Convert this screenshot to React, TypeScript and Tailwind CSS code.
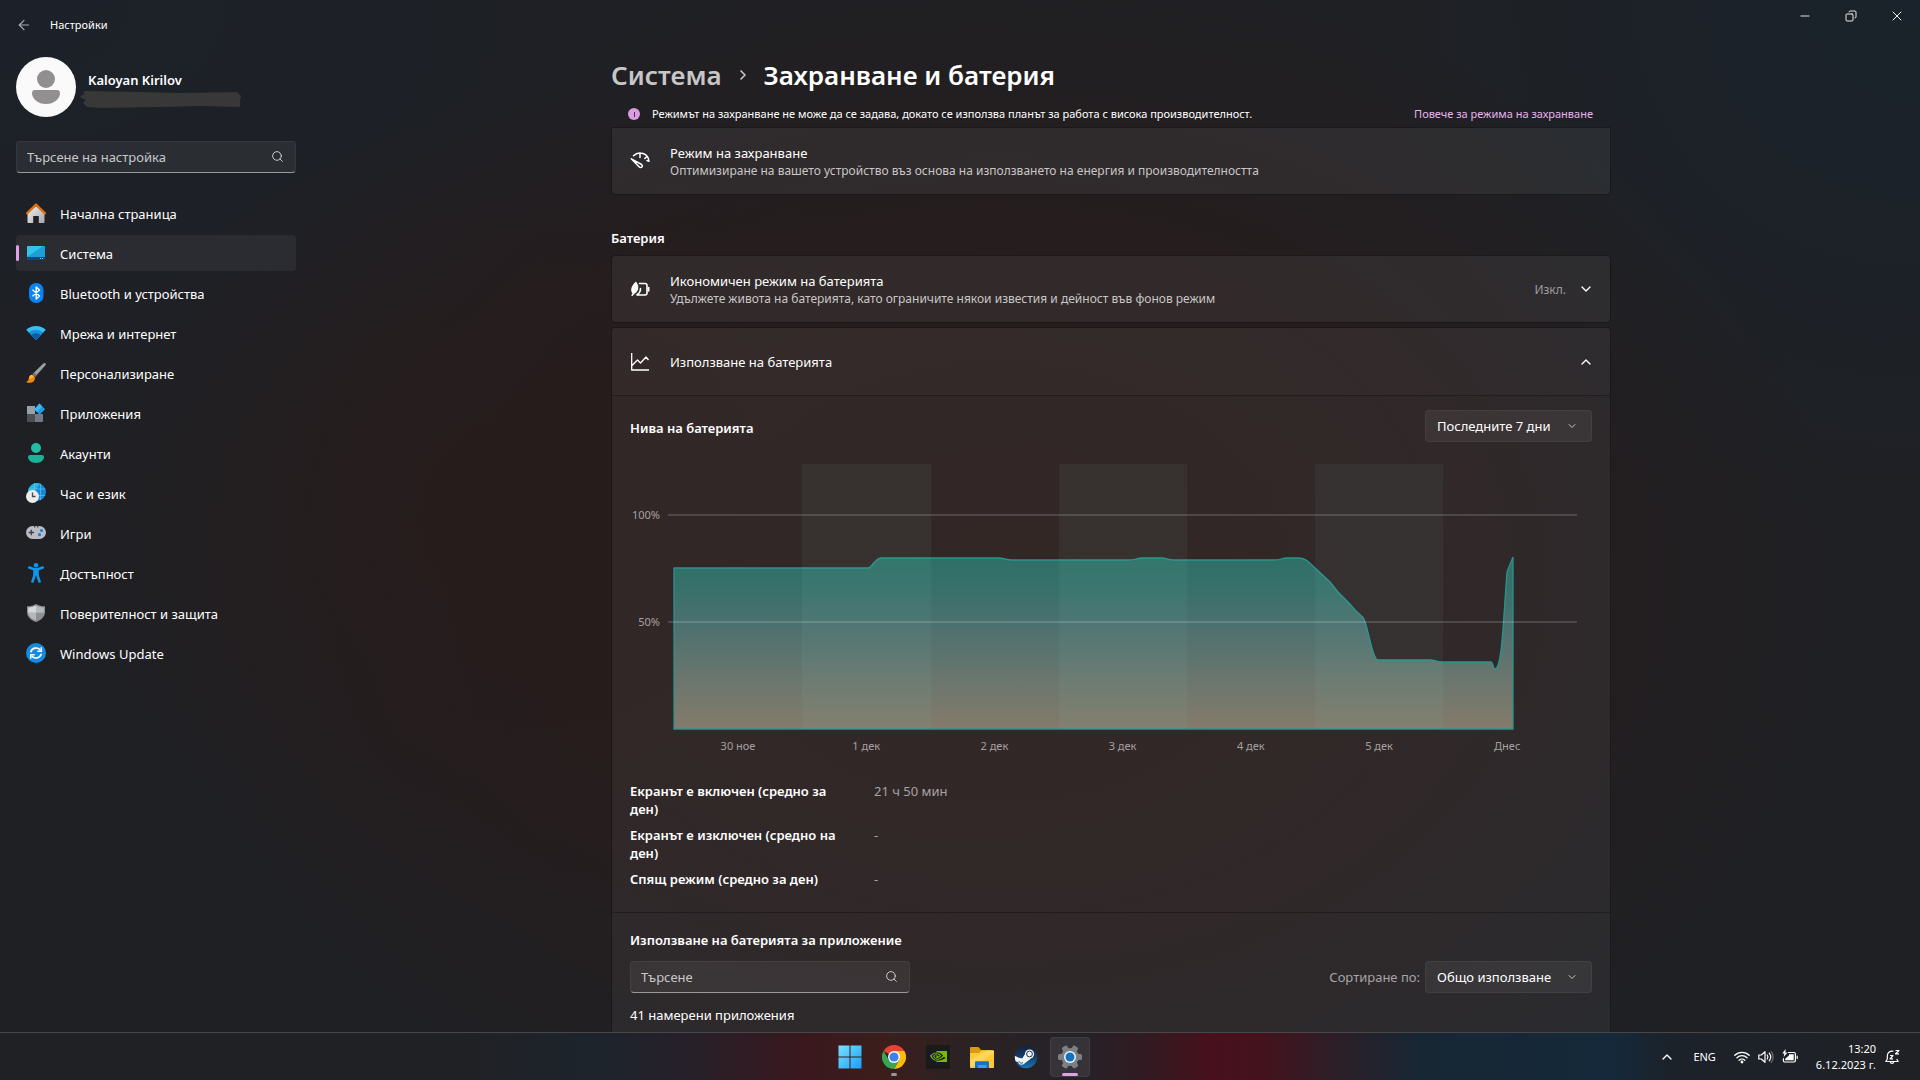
import type { ReactNode } from 'react';
import {
  ArrowLeft,
  ChevronDown,
  ChevronRight,
  ChevronUp,
  Copy,
  Minus,
  Search,
  X,
} from 'lucide-react';
import { SiNvidia } from 'react-icons/si';

const HomeIcon = () => (
  <svg viewBox="0 0 20 20" className="size-5">
    <defs>
      <linearGradient id="home-wall" x1="0" y1="0" x2="1" y2="1">
        <stop offset="0" stopColor="#f2f2f2" />
        <stop offset="1" stopColor="#a5a5a8" />
      </linearGradient>
    </defs>
    <path d="M10 3 1.500 11v8c0 .6.4 1 1 1h4.700v-7h5.600v7h4.700c.6 0 1-.4 1-1v-8z" fill="url(#home-wall)" />
    <path d="M1 10.300 10 1.500l9 8.800" fill="none" stroke="#e8700c" strokeWidth="2.200" strokeLinecap="round" strokeLinejoin="round" />
  </svg>
);

const SystemIcon = () => (
  <svg viewBox="0 0 20 20" className="size-5">
    <rect x="1" y="3" width="18" height="14" rx="1" fill="#1b9fd6" />
    <path d="M2 3h15L1 14V4c0-.6.4-1 1-1z" fill="#34c3e8" />
    <path d="M1 14h18v2c0 .6-.4 1-1 1H2c-.6 0-1-.4-1-1z" fill="#0c4a75" />
    <path d="M14 15h1v1h-1zM16 15h1v1h-1z" fill="#7fd2f2" />
  </svg>
);

const BluetoothIcon = () => (
  <svg viewBox="0 0 20 20" className="size-5">
    <rect x="3" y="0" width="14.500" height="20" rx="7" fill="#0a84f5" />
    <path d="m6.500 6.700 7 6.300-3.300 3V4l3.300 3-7 6.300" fill="none" stroke="#fff" strokeWidth="1.400" strokeLinejoin="round" />
  </svg>
);

const NetworkIcon = () => (
  <svg viewBox="0 0 20 20" className="size-5">
    <path d="M10 3C6.300 3 2.800 4.400.2 6.800L10 17l9.800-10.200C17.200 4.400 13.700 3 10 3z" fill="#35c1f1" />
    <path d="M10 6.800c-2.700 0-5.100 1-7 2.800L10 17l7-7.400a10 10 0 0 0-7-2.800z" fill="#1a8fdd" />
    <path d="M10 10.300c-1.700 0-3.300.6-4.500 1.800L10 17l4.500-4.900a6.500 6.500 0 0 0-4.500-1.800z" fill="#0b5ca8" />
  </svg>
);

const BrushIcon = () => (
  <svg viewBox="0 0 20 20" className="size-5">
    <path d="M19.500.4c-.6-.6-1.500-.4-2.200.2L6.500 11l2.700 2.700L19.200 2.600c.6-.7.8-1.600.3-2.200z" fill="#9b9ea3" />
    <path d="m6.500 11 2.700 2.700 1.700-1.800-2.600-2.700z" fill="#6e7277" />
    <path d="M5.500 11.800c-1.700.5-2.400 2-2.700 3.700C2.600 17 1.800 18.300.2 19c2.300 1.400 5.800 1 7.500-.8 1.300-1.300 1.500-3 .9-4.600z" fill="#f2860d" />
    <path d="M5.500 11.800c-1.700.5-2.400 2-2.700 3.700 2 .6 4.200-.7 5-2.800z" fill="#fbb83b" />
  </svg>
);

const AppsIcon = () => (
  <svg viewBox="0 0 20 20" className="size-5">
    <path d="M1 3h8v8H1z" fill="#9aa0a8" />
    <path d="M1 11h8v8H2c-.6 0-1-.4-1-1z" fill="#4c5056" />
    <path d="M9 11h8v7c0 .6-.4 1-1 1H9z" fill="#747a84" />
    <path d="M13.500.5 19 6.300l-5.500 5.500L8.300 6.300z" fill="#1f9be8" />
    <path d="M13.500.5 8.300 6.300l2.500 2.700 5.500-5.600z" fill="#3bb8f2" />
  </svg>
);

const AccountIcon = () => (
  <svg viewBox="0 0 20 20" className="size-5">
    <circle cx="10" cy="5" r="5" fill="#20bfa5" />
    <path d="M4.200 12h11.600c1.200 0 2.200.9 2.200 2.100C18 17.500 14.500 20 10 20s-8-2.500-8-5.900C2 12.900 3 12 4.200 12z" fill="#1bb39a" />
  </svg>
);

const TimeIcon = () => (
  <svg viewBox="0 0 20 20" className="size-5">
    <circle cx="11" cy="9" r="9" fill="#1787d8" />
    <path d="M2 9a9 9 0 0 1 12-8.500L4.500 15A9 9 0 0 1 2 9z" fill="#2fb4df" />
    <path d="M3 6h16M8.500.5v17M14.500.7v16.500M7 12.500h12" stroke="#6fd0f0" strokeWidth=".8" opacity=".7" />
    <circle cx="6.500" cy="13.500" r="6.500" fill="#ececec" />
    <path d="M6.500 9.500v4h3" fill="none" stroke="#4a4a4a" strokeWidth="1.300" />
  </svg>
);

const GamesIcon = () => (
  <svg viewBox="0 0 20 20" className="size-5">
    <rect x="0" y="3" width="20" height="13" rx="6.500" fill="#b9bcc2" />
    <path d="M8 3h1.500v1.500H8zM11 3h1.500v1.500H11z" fill="#4b4d52" />
    <path d="M5.300 6.800v5.400M2.600 9.500H8" stroke="#3d3f44" strokeWidth="1.300" />
    <circle cx="15.500" cy="7.500" r="1.600" fill="#1a7fd4" />
    <circle cx="13.500" cy="11.700" r="1.600" fill="#1a7fd4" />
  </svg>
);

const AccessibilityIcon = () => (
  <svg viewBox="0 0 20 20" className="size-5">
    <circle cx="10" cy="2.300" r="2.300" fill="#1296ea" />
    <path d="M3.300 4.500 8 6.200h4l4.700-1.700M10 7v4.500M8.500 8v4.500L6.500 18.500M11.500 8v4.500l2 6" fill="none" stroke="#1296ea" strokeWidth="2.600" strokeLinecap="round" strokeLinejoin="round" />
  </svg>
);

const ShieldIcon = () => (
  <svg viewBox="0 0 20 20" className="size-5">
    <path d="M10 1c2.500 1.600 5.500 2.300 9 2.300V9c0 4.500-3.500 8-9 10-5.500-2-9-5.500-9-10V3.300C4.500 3.300 7.500 2.600 10 1z" fill="#8c8f93" />
    <path d="M10 2.500v7.300H2.200V4.500c3-.1 5.500-.7 7.800-2z" fill="#d5d7d9" />
    <path d="M10 2.500v7.300h7.800V4.500c-3-.1-5.500-.7-7.800-2zM10 9.800v7.800c-4.500-1.700-7.400-4.400-7.800-7.800z" fill="#b6b9bc" />
  </svg>
);

const UpdateIcon = () => (
  <svg viewBox="0 0 20 20" className="size-5">
    <circle cx="10" cy="10" r="10" fill="#128be0" />
    <path d="M4.700 9.200A5.500 5.500 0 0 1 14.300 7M15.300 10.800A5.500 5.500 0 0 1 5.700 13" fill="none" stroke="#fff" strokeWidth="1.600" />
    <path d="M15.300 4.200v4h-4M4.700 15.800v-4h4" fill="none" stroke="#fff" strokeWidth="1.500" />
  </svg>
);

const PowerModeIcon = () => (
  <svg viewBox="0 0 20 20" className="size-5 text-white">
    <g fill="none" stroke="currentColor" strokeWidth="1.500" strokeLinecap="round" strokeLinejoin="round">
      <path d="M3.500 4.800a9 9 0 0 1 15.500 5.500l-2-.8M10 2.500v4M14.800 7.500l2-2" />
      <path d="m1.300 7.800 8 8.200c.8.800 2.100.7 2.700-.1.600-.8.400-1.800-.4-2.400z" />
    </g>
  </svg>
);

const SaverIcon = () => (
  <svg viewBox="0 0 20 20" className="size-5 text-white">
    <path d="M6 2.500c.3 1 1.800 2.200 2.200 4.500.5 3-.7 6.500-3.700 7.700l-2.300 2.500-1-1 1.300-1.700C-.3 11 1.500 6.500 6 2.500z" fill="currentColor" />
    <path d="M9.500 4.500H15c1.200 0 2 .8 2 2V14c0 1.200-.8 2-2 2H6.500c2.500-1.200 4-3.500 4-6.500M18.700 8.500v3.500" fill="none" stroke="currentColor" strokeWidth="1.600" strokeLinecap="round" />
  </svg>
);

const UsageIcon = () => (
  <svg viewBox="0 0 20 20" className="size-5 text-white">
    <path d="M1.700 1v17H19M2 13.500 7.500 8l3 3 5.500-6 2.500 3" fill="none" stroke="currentColor" strokeWidth="1.300" strokeLinejoin="round" />
  </svg>
);

const StartIcon = () => (
  <svg viewBox="0 0 24 24" className="size-6">
    <defs>
      <linearGradient id="start-fill" x1="0" y1="0" x2="1" y2="1">
        <stop offset="0" stopColor="#7be0ff" />
        <stop offset="1" stopColor="#17a0f8" />
      </linearGradient>
    </defs>
    <path d="M.5.500h11v11H.5zM12.500.500h11v11h-11zM.5 12.500h11v11H.5zM12.500 12.500h11v11h-11z" fill="url(#start-fill)" />
  </svg>
);

const ChromeIcon = () => (
  <svg viewBox="0 0 24 24" className="size-6">
    <path d="M12 12 1.600 6A12 12 0 0 1 22.400 6z" fill="#ea4335" />
    <path d="M12 12V6h10.400A12 12 0 0 1 12 24l5.200-9z" fill="#fbbc05" />
    <path d="M12 12l5.200 3L12 24A12 12 0 0 1 1.600 6l5.200 9z" fill="#34a853" />
    <circle cx="12" cy="12" r="6" fill="#fff" />
    <circle cx="12" cy="12" r="4.600" fill="#3b82ee" />
  </svg>
);

const FolderIcon = () => (
  <svg viewBox="0 0 24 24" className="size-6">
    <path d="M0 3c0-.6.400-1 1-1h7.500l2.500 3H22c.6 0 1 .4 1 1v4H0z" fill="#d99a13" />
    <path d="M0 8h9l2.500-2.500H23c.6 0 1 .4 1 1V22c0 .6-.4 1-1 1H1c-.6 0-1-.4-1-1z" fill="#fcc93c" />
    <path d="M0 15 17 5.500h6c.6 0 1 .4 1 1V8L1 22.500z" fill="#ffdd75" opacity=".6" />
    <path d="M5 23v-5.500c0-.8.500-1.200 1.200-1.200h11.600c.7 0 1.200.4 1.200 1.200V23z" fill="#1474c4" />
    <path d="M8 20h8.500v3H8z" fill="#3a9fe8" />
  </svg>
);

const SteamIcon = () => (
  <svg viewBox="0 0 24 24" className="size-6">
    <defs>
      <linearGradient id="steam-fill" x1="0" y1="0" x2="0" y2="1">
        <stop offset="0" stopColor="#16203a" />
        <stop offset=".5" stopColor="#123f6b" />
        <stop offset="1" stopColor="#1778b4" />
      </linearGradient>
      <clipPath id="steam-disc">
        <circle cx="12" cy="12" r="11.200" />
      </clipPath>
    </defs>
    <circle cx="12" cy="12" r="11.200" fill="url(#steam-fill)" />
    <g clipPath="url(#steam-disc)">
      <path d="M0 10.500 8 14l3-5 6 4.500-6.500 5L0 16z" fill="#f2f4f6" />
      <circle cx="7.500" cy="16.500" r="3.200" fill="#f2f4f6" />
      <path d="M5 16.300c.7 1.900 2.800 2.500 4 1.200" fill="none" stroke="#155a90" strokeWidth="1" />
      <circle cx="15.500" cy="9" r="4.600" fill="#f2f4f6" />
      <circle cx="15.500" cy="9" r="2.900" fill="#f2f4f6" stroke="#16365c" strokeWidth="1" />
    </g>
  </svg>
);

const GearIcon = () => (
  <svg viewBox="0 0 24 24" className="size-6">
    <g fill="#7b8087">
      <rect x="9" y="0" width="6" height="24" rx="1.500" transform="rotate(30 12 12)" />
      <rect x="9" y="0" width="6" height="24" rx="1.500" transform="rotate(90 12 12)" />
      <rect x="9" y="0" width="6" height="24" rx="1.500" transform="rotate(150 12 12)" />
      <circle cx="12" cy="12" r="9" />
    </g>
    <circle cx="12" cy="12" r="6" fill="#f3f3f3" />
    <circle cx="12" cy="12" r="4.500" fill="#1173bd" />
  </svg>
);

const WifiIcon = () => (
  <svg viewBox="0 0 16 16" className="size-4">
    <g fill="none" stroke="currentColor" strokeWidth="1.300" strokeLinecap="round">
      <path d="M.8 6.300a10.200 10.200 0 0 1 14.400 0M3 8.800a7 7 0 0 1 10 0M5.200 11.200a4 4 0 0 1 5.600 0" />
    </g>
    <circle cx="8" cy="13" r="1.400" fill="currentColor" />
  </svg>
);

const VolumeIcon = () => (
  <svg viewBox="0 0 16 16" className="size-4">
    <g fill="none" stroke="currentColor" strokeWidth="1.200" strokeLinecap="round" strokeLinejoin="round">
      <path d="M.8 6v4h2.500L7 13.300V2.700L3.300 6zM9.200 6a3.300 3.300 0 0 1 0 4M11.200 4.200a6 6 0 0 1 0 7.600" />
      <path d="M13.200 2.600a8.500 8.500 0 0 1 0 10.800" opacity=".35" />
    </g>
  </svg>
);

const BatteryIcon = () => (
  <svg viewBox="0 0 16 16" className="size-4">
    <path d="M6.500 3.500H12c.8 0 1.400.6 1.400 1.400v6.700c0 .8-.6 1.400-1.400 1.400H2.800c-.8 0-1.400-.6-1.400-1.400V9.500M15.200 7v2.500" fill="none" stroke="currentColor" strokeWidth="1.200" strokeLinecap="round" />
    <path d="M7 5.300h4.700v5.900H3.200V9.800L7 6.500zM3.500 0 .3 4.500h2L1.700 8 5.500 3.500H3.400z" fill="currentColor" />
  </svg>
);

const BellIcon = () => (
  <svg viewBox="0 0 16 16" className="size-4">
    <g fill="none" stroke="currentColor" strokeWidth="1.200" strokeLinejoin="round">
      <path d="M9.500 2.300A4.800 4.800 0 0 0 3.300 7v3L1.800 12.500h12.400L12.700 10M6.200 12.700c.2 1 .9 1.700 1.800 1.700s1.600-.7 1.800-1.700" />
      <path d="M6 6.500h3L6 9.800h3M11.500 1.500H15l-3.500 3.300H15" />
    </g>
  </svg>
);

const navItems = [
  { label: 'Начална страница', icon: <HomeIcon /> },
  { label: 'Система', icon: <SystemIcon />, active: true },
  { label: 'Bluetooth и устройства', icon: <BluetoothIcon /> },
  { label: 'Мрежа и интернет', icon: <NetworkIcon /> },
  { label: 'Персонализиране', icon: <BrushIcon /> },
  { label: 'Приложения', icon: <AppsIcon /> },
  { label: 'Акаунти', icon: <AccountIcon /> },
  { label: 'Час и език', icon: <TimeIcon /> },
  { label: 'Игри', icon: <GamesIcon /> },
  { label: 'Достъпност', icon: <AccessibilityIcon /> },
  { label: 'Поверителност и защита', icon: <ShieldIcon /> },
  { label: 'Windows Update', icon: <UpdateIcon /> },
];

const days = ['30 ное', '1 дек', '2 дек', '3 дек', '4 дек', '5 дек', 'Днес'];

const stats = [
  { label: 'Екранът е включен (средно за ден)', value: '21 ч 50 мин' },
  { label: 'Екранът е изключен (средно на ден)', value: '-' },
  { label: 'Спящ режим (средно за ден)', value: '-' },
];

function SearchBox({ id, placeholder }: { id: string; placeholder: string }) {
  return (
    <div className="relative w-[280px]">
      <input
        id={id}
        type="text"
        aria-label={placeholder}
        placeholder={placeholder}
        className="block h-8 w-full rounded border border-white/5 border-b-[#9a9a9a] bg-[#ffffff0f] pl-[10px] pr-10 text-[13px] text-white outline-none placeholder:text-[#c8c8ca]"
      />
      <Search className="pointer-events-none absolute right-3 top-[9px] size-[13px] text-[#d0d0d0]" strokeWidth={1.8} />
    </div>
  );
}

function Dropdown({ id, label, value }: { id: string; label: string; value: string }) {
  return (
    <div className="relative">
      <select
        id={id}
        aria-label={label}
        className="block h-8 w-[167px] appearance-none rounded border border-white/5 bg-white/6 pl-[11px] text-[13px] text-white outline-none"
      >
        <option>{value}</option>
      </select>
      <ChevronDown className="pointer-events-none absolute right-[14px] top-[10px] size-3 text-[#c4c4c4]" strokeWidth={2} />
    </div>
  );
}

function BatteryChart() {
  const area =
    'M44 104H238C242 104 245 94 251 94H368C374 94 376 96 382 96H500C505 96 507 94 512 94H532C536 94 538 96 543 96H645C650 96 652 94 657 94H668C676 94 679 98 685 104L700 118L708 128L718 138L726 147L733 153.500C738 160 742 196 748 196H800C805 196 806 198 812 198H861C863 198 863 205 865 205C872 204 873 160 877 108L883 93V265H44Z';
  return (
    <svg viewBox="0 0 962 292" className="block w-full" role="img" aria-label="Нива на батерията">
      <defs>
        <linearGradient id="level-fill" gradientUnits="userSpaceOnUse" x1="0" y1="94" x2="0" y2="265">
          <stop offset="0" stopColor="#2e7067" />
          <stop offset=".15" stopColor="#36706a" />
          <stop offset=".4" stopColor="#4d706f" />
          <stop offset=".7" stopColor="#6a766e" />
          <stop offset="1" stopColor="#847b6b" />
        </linearGradient>
      </defs>
      <path d={area} fill="url(#level-fill)" stroke="#2a948a" strokeWidth="1.300" />
      <path d="M172 0h129v265H172zM429 0h128v265H429zM685 0h128v265H685z" fill="#80d8c8" fillOpacity=".06" />
      <path d="M38 51H947M38 158H947" stroke="#ffffff" strokeOpacity=".15" strokeWidth="2" />
      <g fill="#a5a0a0" fontSize="11">
        <text x="30" y="55" textAnchor="end">100%</text>
        <text x="30" y="162" textAnchor="end">50%</text>
        {days.map((day, i) => (
          <text key={day} x={108 + i * 128.2} y="286" textAnchor="middle">{day}</text>
        ))}
      </g>
    </svg>
  );
}

function TaskButton({ label, active, children }: { label: string; active?: boolean; children: ReactNode }) {
  return (
    <button
      type="button"
      aria-label={label}
      className={`relative flex size-10 items-center justify-center rounded ${active ? 'border border-white/5 bg-white/8' : ''}`}
    >
      {children}
    </button>
  );
}

export default function App() {
  return (
    <div className="flex h-screen flex-col overflow-hidden bg-[#1f2024] bg-[radial-gradient(ellipse_24%_38%_at_28%_48%,#271c1c_0%,#271c1c00_100%),radial-gradient(ellipse_44%_58%_at_52%_54%,#281c1a_0%,#271c1ccc_55%,#1f202400_100%),radial-gradient(ellipse_40%_45%_at_0%_0%,#1c2129_0%,#1c212900_100%),radial-gradient(ellipse_30%_50%_at_100%_0%,#1a232b_0%,#1a232b00_100%)] font-['Noto_Sans','Open_Sans',sans-serif] text-[13px] leading-[18px] text-white">
      <header className="flex h-8 shrink-0 items-start justify-between">
        <div className="flex items-center pl-4 pt-4">
          <button type="button" aria-label="Назад" className="text-[#a8abb0]">
            <ArrowLeft className="size-4" strokeWidth={1.8} />
          </button>
          <h1 className="pl-[18px] text-[11px]">Настройки</h1>
        </div>
        <div className="flex">
          <button type="button" aria-label="Минимизиране" className="flex h-8 w-[46px] items-center justify-center">
            <Minus className="size-[14px]" strokeWidth={1.5} />
          </button>
          <button type="button" aria-label="Възстановяване" className="flex h-8 w-[46px] items-center justify-center">
            <Copy className="size-3 -scale-x-100" strokeWidth={1.8} />
          </button>
          <button type="button" aria-label="Затваряне" className="flex h-8 w-[46px] items-center justify-center">
            <X className="size-4" strokeWidth={1.4} />
          </button>
        </div>
      </header>

      <div className="flex min-h-0 flex-1">
        <aside className="w-[302px] shrink-0 pl-4 pt-[25px]">
          <div className="flex items-center">
            <div className="flex size-[60px] items-center justify-center rounded-full bg-[#fafafa]">
              <svg viewBox="0 0 30 36" className="h-9 w-[30px]">
                <circle cx="15" cy="10" r="9" fill="#918f90" />
                <path d="M4 21h22c1.800 0 3 1.200 3 3 0 6-6 11-14 11S1 30 1 24c0-1.800 1.200-3 3-3z" fill="#918f90" />
              </svg>
            </div>
            <div className="pl-1 pt-[5px]">
              <p className="pl-2 font-semibold">Kaloyan Kirilov</p>
              <svg viewBox="0 0 162 18" className="mt-px h-[18px] w-[162px]">
                <path d="M4 1 60 2l40 1 57-1 4 4-1 4 0 7-40-1-40 1-60 1-13-1-4-4 3-3-6-3 4-3z" fill="#383839" />
              </svg>
            </div>
          </div>

          <div className="pt-6">
            <SearchBox id="settings-search" placeholder="Търсене на настройка" />
          </div>

          <nav className="flex w-[280px] flex-col gap-1 pt-[22px]">
            {navItems.map((item) => (
              <a
                key={item.label}
                href="#"
                className={`relative flex h-9 items-center gap-[14px] rounded pl-[10px] ${item.active ? 'bg-[#2b2b32]' : ''}`}
              >
                {item.active && <span className="absolute left-0 top-[10px] h-4 w-[3px] rounded-full bg-[#dfa0e6]" />}
                {item.icon}
                <span className="pt-0.5">{item.label}</span>
              </a>
            ))}
          </nav>
        </aside>

        <main className="min-w-0 flex-1 overflow-hidden">
          <div className="mx-auto max-w-[1000px]">
            <h2 className="flex items-center pt-[25px] text-[26px] font-semibold leading-9">
              <span className="text-[#c8c6c7]">Система</span>
              <ChevronRight className="mx-[13px] size-4 text-[#c8c6c7]" strokeWidth={2.5} />
              <span>Захранване и батерия</span>
            </h2>

            <div className="flex items-center justify-between pb-1 pl-[17px] pr-[18px] pt-3 text-[11px]">
              <div className="flex items-center gap-3">
                <span className="flex size-3 items-center justify-center rounded-full bg-[#d99be2]">
                  <span className="h-[5px] w-px bg-[#4a2f50]" />
                </span>
                <span>Режимът на захранване не може да се задава, докато се използва планът за работа с висока производителност.</span>
              </div>
              <a href="#" className="text-[#e6b3ec]">Повече за режима на захранване</a>
            </div>

            <section className="flex h-[68px] items-center gap-5 rounded-b border border-black/20 bg-white/6 bg-clip-padding px-[18px]">
              <PowerModeIcon />
              <div className="pt-0.5">
                <h3>Режим на захранване</h3>
                <p className="text-xs leading-[18px] text-[#c9c6c6]">Оптимизиране на вашето устройство въз основа на използването на енергия и производителността</p>
              </div>
            </section>

            <h3 className="pb-2 pt-[34px] font-semibold">Батерия</h3>

            <section className="flex h-[68px] items-center gap-5 rounded border border-black/20 bg-white/6 bg-clip-padding px-[18px]">
              <SaverIcon />
              <div className="pt-0.5">
                <h3>Икономичен режим на батерията</h3>
                <p className="text-xs leading-[18px] text-[#c9c6c6]">Удължете живота на батерията, като ограничите някои известия и дейност във фонов режим</p>
              </div>
              <span className="ml-auto pt-0.5 text-xs text-[#a09c9d]">Изкл.</span>
              <button type="button" aria-label="Разгъване" className="-ml-2 -mr-0.5">
                <ChevronDown className="size-4" strokeWidth={2} />
              </button>
            </section>

            <section className="mt-1 rounded-t border border-b-0 border-black/20 bg-white/5 bg-clip-padding">
              <div className="flex h-[68px] items-center gap-5 border-b border-black/30 bg-white/1 px-[18px]">
                <UsageIcon />
                <h3>Използване на батерията</h3>
                <button type="button" aria-label="Свиване" className="-mr-0.5 ml-auto">
                  <ChevronUp className="size-4" strokeWidth={2} />
                </button>
              </div>

              <div className="border-b border-black/30 px-[18px] pb-6 pt-[14px]">
                <div className="flex items-center justify-between pb-[22px]">
                  <h4 className="pt-1 font-semibold">Нива на батерията</h4>
                  <Dropdown id="range" label="Период" value="Последните 7 дни" />
                </div>
                <BatteryChart />
                <dl className="flex flex-col gap-2 pt-[26px]">
                  {stats.map((stat) => (
                    <div key={stat.label} className="flex gap-6">
                      <dt className="w-[220px] pr-1 font-semibold">{stat.label}</dt>
                      <dd className="text-[#a8a3a3]">{stat.value}</dd>
                    </div>
                  ))}
                </dl>
              </div>

              <div className="px-[18px] pb-8 pt-[18px]">
                <h4 className="font-semibold">Използване на батерията за приложение</h4>
                <div className="flex items-center justify-between pb-[13px] pt-3">
                  <SearchBox id="app-search" placeholder="Търсене" />
                  <div className="flex items-center gap-[5px]">
                    <label htmlFor="sort" className="text-[#a8a5a6]">Сортиране по:</label>
                    <Dropdown id="sort" label="Сортиране по" value="Общо използване" />
                  </div>
                </div>
                <p>41 намерени приложения</p>
              </div>
            </section>
          </div>
        </main>
      </div>

      <footer className="grid h-12 shrink-0 grid-cols-[1fr_auto_1fr] items-center border-t border-[#47474a] bg-[linear-gradient(90deg,#202125_0%,#202125_24%,#1d242c_31%,#27202a_36%,#3a181d_42%,#3b1e1c_46%,#2c2223_50%,#242228_56%,#331a21_60%,#47111c_63%,#43131d_66%,#2a2029_70%,#172734_74%,#15293a_84%,#1c222a_87%,#202125_100%)]">
        <div />
        <div className="flex gap-1">
          <TaskButton label="Старт">
            <StartIcon />
          </TaskButton>
          <TaskButton label="Chrome">
            <ChromeIcon />
            <span className="absolute bottom-px h-[3px] w-[6px] rounded-full bg-[#9a9797]" />
          </TaskButton>
          <TaskButton label="NVIDIA">
            <span className="flex size-6 items-center justify-center bg-[#1a1a1a]">
              <SiNvidia className="size-[17px] text-[#76b900]" />
            </span>
          </TaskButton>
          <TaskButton label="Файлове">
            <FolderIcon />
          </TaskButton>
          <TaskButton label="Steam">
            <SteamIcon />
          </TaskButton>
          <TaskButton label="Настройки" active>
            <GearIcon />
            <span className="absolute bottom-0 h-[3px] w-4 rounded-full bg-[#dfa0e6]" />
          </TaskButton>
        </div>
        <div className="flex items-center justify-end pr-5 text-[11px] leading-4">
          <button type="button" aria-label="Скрити икони">
            <ChevronUp className="size-4" strokeWidth={2} />
          </button>
          <span className="pl-[18px]">ENG</span>
          <div className="flex gap-2 pl-[18px]">
            <WifiIcon />
            <VolumeIcon />
            <BatteryIcon />
          </div>
          <p className="pl-[18px] pr-2 text-right">
            13:20
            <br />
            6.12.2023 г.
          </p>
          <BellIcon />
        </div>
      </footer>
    </div>
  );
}
